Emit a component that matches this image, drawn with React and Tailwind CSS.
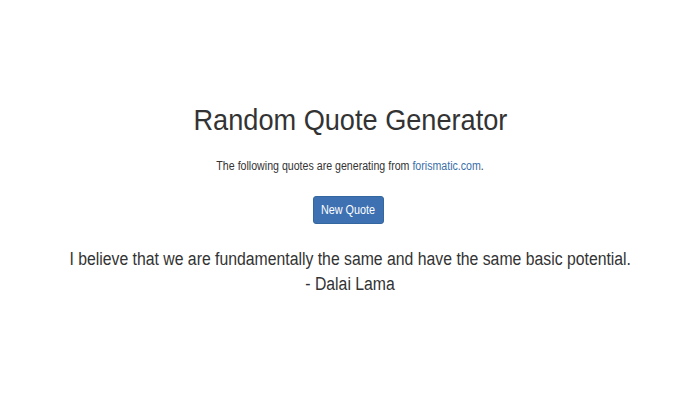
export default function App() {
  return (
    <div className="min-h-[400px] w-[700px] bg-white text-center text-[#333333]" style={{ fontFamily: '"Liberation Sans", Arial, sans-serif' }}>
      <div className="flex flex-col items-center pt-[100px]">
        <h1 className="scale-x-[0.905] text-[30px] leading-[40px]">Random Quote Generator</h1>
        <p className="mt-[18px] scale-x-[0.885] text-[12px] leading-[17px]">
          The following quotes are generating from{" "}
          <a href="#" className="text-[#3b6ea8]">forismatic.com</a>.
        </p>
        <button
          type="button"
          className="mt-[21px] mr-[3px] h-[28px] w-[71px] rounded-[3px] border border-[#34679f] bg-[#3e71b2] text-[12px] text-white"
        >
          <span className="inline-block scale-x-[0.9]">New Quote</span>
        </button>
        <p className="mt-[23px] scale-x-[0.877] text-[18px] leading-[25px]">
          I believe that we are fundamentally the same and have the same basic potential.
        </p>
        <p className="scale-x-[0.877] text-[18px] leading-[25px]">- Dalai Lama</p>
      </div>
    </div>
  );
}
